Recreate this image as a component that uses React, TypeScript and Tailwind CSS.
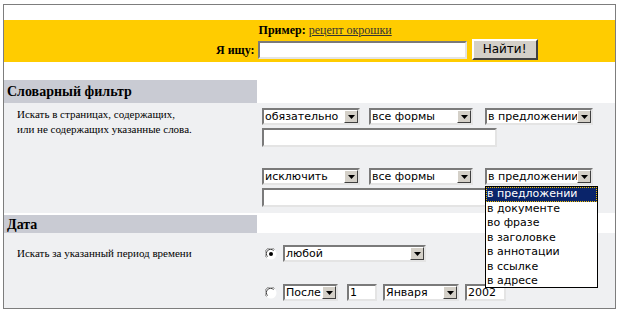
const serif = "font-['Liberation_Serif','Times_New_Roman',serif]";
const sans = "font-['DejaVu_Sans','Verdana',sans-serif]";

function Arrow() {
  return (
    <span className="flex w-[14px] items-center justify-center border border-t-white border-l-white border-r-[#404040] border-b-[#404040] bg-[#d4d0c8]">
      <svg width="7" height="4" viewBox="0 0 7 4">
        <path d="M0 0h7L3.5 4z" fill="#000" />
      </svg>
    </span>
  );
}

function Select({ value, className }: { value: string; className: string }) {
  return (
    <div
      className={`flex h-[17px] shrink-0 border-2 border-t-[#7a7a7a] border-l-[#7a7a7a] border-r-[#e4e4e4] border-b-[#e4e4e4] bg-white ${className}`}
    >
      <span className={`flex-1 overflow-hidden whitespace-nowrap pl-[1px] text-[11px] leading-[13px] text-black ${sans}`}>
        {value}
      </span>
      <Arrow />
    </div>
  );
}

function Field({ value = "", className }: { value?: string; className: string }) {
  return (
    <div
      className={`shrink-0 border-2 border-t-[#7a7a7a] border-l-[#7a7a7a] border-r-[#e4e4e4] border-b-[#e4e4e4] bg-white pl-[1px] text-[11px] leading-[13px] text-black ${sans} ${className}`}
    >
      {value}
    </div>
  );
}

function Radio({ checked }: { checked?: boolean }) {
  return (
    <svg width="12" height="12" viewBox="0 0 12 12" className="shrink-0">
      <circle cx="6" cy="6" r="5.5" fill="#fff" />
      <path d="M1.5 9.5A5.5 5.5 0 0 1 9.5 1.5" stroke="#808080" strokeWidth="1" fill="none" />
      <path d="M2.6 8.6A4 4 0 0 1 8.6 2.6" stroke="#404040" strokeWidth="1" fill="none" />
      {checked && <circle cx="6" cy="6" r="2" fill="#000" />}
    </svg>
  );
}

const listItems = ["в предложении", "в документе", "во фразе", "в заголовке", "в аннотации", "в ссылке", "в адресе"];

function OpenSelect() {
  return (
    <div className="relative">
      <Select value="в предложении" className="w-[108px]" />
      <div className="absolute left-0 top-[18px] z-10 h-[102px] w-[113px] overflow-hidden border border-black bg-white">
        {listItems.map((item, i) => (
          <div
            key={item}
            className={`h-[14.5px] pl-[1px] text-[11px] leading-[14px] ${sans} ${
              i === 0 ? "bg-[#0a246a] text-white outline outline-1 outline-dotted outline-offset-[-1px] outline-[#f0c000]" : "text-black"
            }`}
          >
            {item}
          </div>
        ))}
      </div>
    </div>
  );
}

function FilterRow({ first, open }: { first: string; open?: boolean }) {
  return (
    <div className="flex flex-col gap-[3px]">
      <div className="flex items-center">
        <Select value={first} className="w-[98px]" />
        <Select value="все формы" className="ml-[9px] w-[104px]" />
        <div className="ml-[12px]">
          {open ? <OpenSelect /> : <Select value="в предложении" className="w-[108px]" />}
        </div>
      </div>
      <Field className="h-[19px] w-[235px]" />
    </div>
  );
}

export default function App() {
  return (
    <div className="h-[320px] w-[623px] bg-white pl-[3px] pt-[4px]">
      <div className="flex h-[305px] w-[613px] flex-col border border-[#7d7d7d] bg-white">
        <div className="h-[15px]" />
        <div className="h-[42px] bg-[#ffcc00] pl-[212px] pt-[3px]">
          <div className={`grid grid-cols-[auto_auto] items-center justify-start text-[12px] text-black ${serif}`}>
            <div />
            <div className="pl-[1px] leading-[14px]">
              <b>Пример:</b>{" "}
              <a href="#" className="text-[#333333] underline">
                рецепт окрошки
              </a>
            </div>
            <b className="pr-[3px] pt-[2px] text-right">Я ищу:</b>
            <div className="flex items-center pt-[2px]">
              <Field className="h-[18px] w-[209px]" />
              <button
                type="button"
                className={`ml-[5px] h-[21px] w-[66px] border-2 border-t-white border-l-white border-r-[#404040] border-b-[#404040] bg-[#d4d0c8] text-[12px] leading-[15px] text-black ${sans}`}
              >
                Найти!
              </button>
            </div>
          </div>
        </div>
        <div className="h-[18px]" />

        <div className="flex h-[23px]">
          <div className={`flex w-[253px] items-center bg-[#c9cbd3] pl-[3px] text-[14px] font-bold text-black ${serif}`}>
            Словарный фильтр
          </div>
        </div>
        <div className="flex h-[110px] bg-[#eff0f2]">
          <div className={`w-[258px] pl-[13px] pt-[4px] text-[11px] leading-[15px] text-black ${serif}`}>
            Искать в страницах, содержащих,
            <br />
            или не содержащих указанные слова.
          </div>
          <div className="flex flex-col gap-[21px] pt-[5px]">
            <FilterRow first="обязательно" />
            <FilterRow first="исключить" open />
          </div>
        </div>

        <div className="h-[2px]" />
        <div className="flex h-[18px]">
          <div className={`flex w-[253px] items-center bg-[#c9cbd3] pl-[3px] text-[14px] font-bold text-black ${serif}`}>
            Дата
          </div>
        </div>
        <div className="flex flex-1 bg-[#eff0f2]">
          <div className={`w-[258px] pl-[13px] pt-[13px] text-[11px] leading-[15px] text-black ${serif}`}>
            Искать за указанный период времени
          </div>
          <div className="flex flex-col gap-[22px] pt-[12px]">
            <div className="flex items-center">
              <span className="ml-[3px]">
                <Radio checked />
              </span>
              <Select value="любой" className="ml-[6px] w-[143px]" />
            </div>
            <div className="flex items-center">
              <span className="ml-[3px]">
                <Radio />
              </span>
              <Select value="После" className="ml-[6px] w-[55px]" />
              <Field value="1" className="ml-[9px] h-[17px] w-[30px]" />
              <Select value="Января" className="ml-[6px] w-[76px]" />
              <Field value="2002" className="ml-[6px] h-[17px] w-[41px]" />
            </div>
          </div>
        </div>
      </div>
    </div>
  );
}
